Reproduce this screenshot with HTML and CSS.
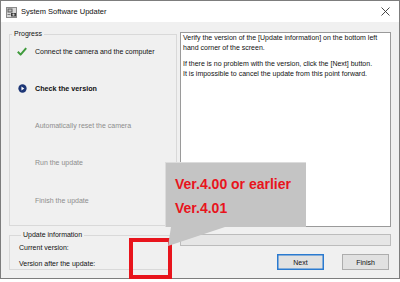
FILE: index.html
```html
<!DOCTYPE html>
<html>
<head>
<meta charset="utf-8">
<link rel="stylesheet" href="styles.css">
</head>
<body>
<div class="window">
  <div class="titlebar">
    <svg class="app-icon" viewBox="0 0 11 11" width="11" height="11">
      <rect x="0.5" y="0.5" width="10" height="10" fill="#d8d8d8" stroke="#8a8a8a" stroke-width="1"/>
      <rect x="1.5" y="1.5" width="5" height="4" fill="#5a5a5a"/>
      <rect x="2.5" y="2.5" width="3" height="2" fill="#bfbfbf"/>
      <rect x="5" y="6" width="5" height="3.5" fill="#3c3c3c"/>
      <circle cx="7.5" cy="7.7" r="1.1" fill="#cfcfcf"/>
      <rect x="1.5" y="7" width="3" height="1" fill="#7a7a7a"/>
    </svg>
    <span class="title">System Software Updater</span>
    <svg class="close" viewBox="0 0 9 9" width="9" height="9">
      <path d="M0.5 0.5 L8.5 8.5 M8.5 0.5 L0.5 8.5" stroke="#333" stroke-width="0.9" fill="none"/>
    </svg>
  </div>
  <div class="content">
    <div class="left">
      <fieldset class="group progress">
        <legend>Progress</legend>
        <ul class="steps">
          <li class="step done">
            <span class="step-icon">
              <svg viewBox="0 0 10 9" width="10" height="9"><path d="M0.8 4.8 L3.6 7.6 L9.2 1.2" stroke="#3f9b3c" stroke-width="2" fill="none" stroke-linejoin="round"/></svg>
            </span>
            <span>Connect the camera and the computer</span>
          </li>
          <li class="step current">
            <span class="step-icon">
              <svg viewBox="0 0 10 10" width="9" height="9"><circle cx="5" cy="5" r="4.6" fill="#1d3676"/><path d="M3.8 2.7 L7 5 L3.8 7.3 Z" fill="#fff"/></svg>
            </span>
            <span>Check the version</span>
          </li>
          <li class="step pending"><span class="step-icon"></span><span>Automatically reset the camera</span></li>
          <li class="step pending"><span class="step-icon"></span><span>Run the update</span></li>
          <li class="step pending"><span class="step-icon"></span><span>Finish the update</span></li>
        </ul>
      </fieldset>
      <fieldset class="group info">
        <legend>Update information</legend>
        <div class="info-row">Current version:</div>
        <div class="info-row">Version after the update:</div>
      </fieldset>
    </div>
    <div class="right">
      <div class="message">
        <p>Verify the version of the [Update information] on the bottom left<br>hand corner of the screen.</p>
        <p>If there is no problem with the version, click the [Next] button.<br>It is impossible to cancel the update from this point forward.</p>
      </div>
      <div class="progressbar"></div>
      <div class="buttons">
        <button class="btn default">Next</button>
        <button class="btn">Finish</button>
      </div>
    </div>
    <div class="highlight"></div>
    <div class="callout">
      <div class="callout-box">
        <div class="callout-line">Ver.4.00 or earlier</div>
        <div class="callout-line">Ver.4.01</div>
      </div>
      <svg class="callout-tail" viewBox="0 0 60 20" width="60" height="20">
        <path d="M6 0 L60 0 L3 19 Z" fill="#c4c4c4"/>
      </svg>
    </div>
  </div>
</div>
</body>
</html>
```

FILE: styles.css
```css
html, body {
  margin: 0;
  padding: 0;
  background: #ffffff;
}
body {
  font-family: "Liberation Sans", Arial, sans-serif;
  width: 400px;
  height: 282px;
  overflow: hidden;
}
.window {
  width: 400px;
  height: 279px;
  box-sizing: border-box;
  border: 1px solid #7d7d7d;
  display: flex;
  flex-direction: column;
  background: #f0f0f0;
}
.titlebar {
  height: 21px;
  flex: none;
  background: #ffffff;
  display: flex;
  align-items: center;
  padding-left: 5px;
}
.app-icon {
  flex: none;
  margin-top: 1px;
}
.title {
  margin-left: 4px;
  font-size: 7.5px;
  color: #111;
}
.close {
  margin-left: auto;
  margin-right: 9px;
}
.content {
  position: relative;
  flex: 1;
  display: flex;
  padding-left: 8px;
}
.left {
  width: 168px;
  padding-top: 8px;
  display: flex;
  flex-direction: column;
  gap: 5px;
}
.group {
  margin: 0;
  padding: 0;
  border: 1px solid #d9d9d9;
  box-sizing: border-box;
  min-width: 0;
}
.group legend {
  font-size: 7px;
  line-height: 8px;
  padding: 0 2px;
  margin-left: 2px;
  color: #111;
}
.progress {
  height: 196px;
}
.steps {
  list-style: none;
  margin: 0;
  padding: 7px 0 0 7px;
  display: flex;
  flex-direction: column;
  gap: 25.25px;
}
.step {
  height: 12px;
  display: flex;
  align-items: center;
  gap: 8px;
  font-size: 7px;
  color: #111;
}
.step-icon {
  width: 10px;
  height: 10px;
  display: flex;
  align-items: center;
  justify-content: center;
}
.step.current {
  font-weight: bold;
  font-size: 7.2px;
}
.step.pending {
  color: #8d8d8d;
}
.info {
  width: 163px;
  height: 39px;
  padding: 1px 0 0 9px;
}
.info-row {
  font-size: 7px;
  line-height: 16px;
  color: #111;
}
.right {
  margin-left: 3px;
  width: 211px;
  display: flex;
  flex-direction: column;
}
.message {
  margin-top: 10px;
  height: 195px;
  box-sizing: border-box;
  background: #ffffff;
  border: 1px solid #9a9a9a;
  padding: 0 2px;
  font-size: 7px;
  line-height: 10px;
  color: #111;
  white-space: nowrap;
}
.message p {
  margin: 0 0 6px 0;
}
.progressbar {
  margin-top: 7px;
  height: 12px;
  box-sizing: border-box;
  background: #e6e6e6;
  border: 1px solid #bcbcbc;
}
.buttons {
  margin-top: 8px;
  display: flex;
  justify-content: flex-end;
  gap: 18px;
  padding-right: 2px;
}
.btn {
  width: 47px;
  height: 16px;
  box-sizing: border-box;
  margin: 0;
  padding: 0;
  background: #e1e1e1;
  border: 1px solid #adadad;
  font-family: "Liberation Sans", Arial, sans-serif;
  font-size: 7px;
  color: #111;
}
.btn.default {
  border: 1px solid #2a7ad0;
  box-shadow: inset 0 0 0 0.5px #2a7ad0;
}
.highlight {
  position: absolute;
  left: 128px;
  top: 216px;
  width: 43px;
  height: 41px;
  box-sizing: border-box;
  border: 4px solid #e8141c;
}
.callout {
  position: absolute;
  left: 164px;
  top: 140px;
}
.callout-box {
  width: 141px;
  height: 65px;
  box-sizing: border-box;
  background: #c4c4c4;
  border-top: 1px solid #dcdcdc;
  border-left: 1px solid #dcdcdc;
  padding: 9px 0 0 9px;
}
.callout-line {
  font-family: "Liberation Sans", Arial, sans-serif;
  font-weight: bold;
  font-size: 14px;
  line-height: 24px;
  color: #e8141c;
}
.callout-tail {
  position: absolute;
  left: 0;
  top: 65px;
}
```
